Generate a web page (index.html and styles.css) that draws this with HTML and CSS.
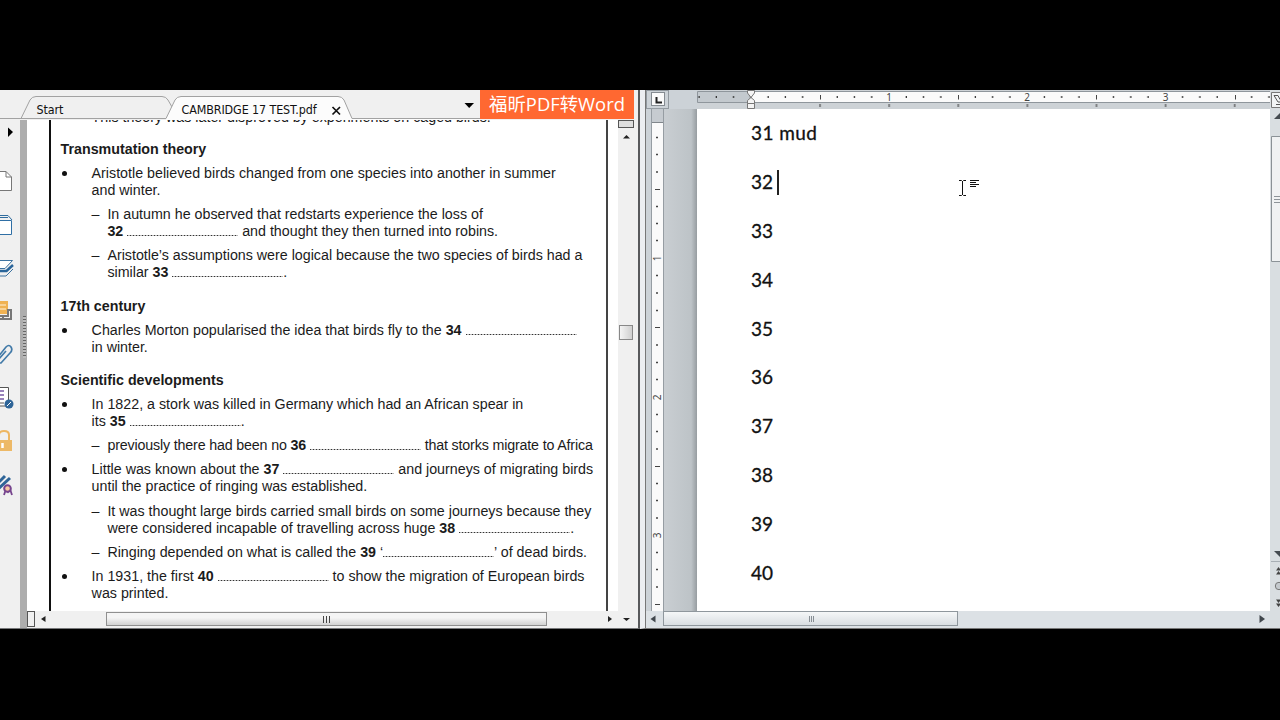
FILE: index.html
```
<!DOCTYPE html>
<html lang="en">
  <head>
    <meta charset="UTF-8" />
    <meta name="viewport" content="width=device-width, initial-scale=1" />
    <title>CAMBRIDGE 17 TEST.pdf</title>
    <link rel="stylesheet" href="styles.css">
  </head>
  <body>
    <div class="screen">
      <section class="reader">
        <header class="tabs">
          <svg class="tab-shapes" width="480" height="30">
            <path d="M-1 28.500H21L30 10Q32 6.500 36 6.500H162Q166 6.500 168 10L172 17" fill="#f0f0f0" stroke="#a2a2a2" />
            <path d="M166 29L175 10Q177 6.500 181 6.500H338Q342 6.500 344 10L352 28.500H480V30H166Z" fill="#fcfcfc" />
            <path d="M166 28.500L175 10Q177 6.500 181 6.500H338Q342 6.500 344 10L352 28.500H480M21 28.500H166" fill="none" stroke="#a2a2a2" />
            <path d="M332.500 17L340 24.500M340 17L332.500 24.500" stroke="#111" stroke-width="1.700" />
            <path d="M464.500 13H474L469.200 18Z" fill="#000" />
          </svg>
          <span class="tab-name">Start</span>
          <span class="tab-name current">CAMBRIDGE 17 TEST.pdf</span>
          <span class="convert">福昕PDF转Word</span>
        </header>

        <div class="reader-body">
          <nav class="tools">
            <svg width="20" height="510">
              <path d="M8 7.500L13 12L8 17Z" fill="#000" />
              <path d="M-2 51.500H6L11.500 57V70.500H-2Z" fill="#fff" stroke="#777" />
              <path d="M6 51.500V57H11.500" fill="none" stroke="#777" />
              <path d="M-2 95.500H8L12 100M-2 97.500H8" fill="none" stroke="#2f6c9e" />
              <path d="M-2 100.500H11.500V114.500H-2Z" fill="#fff" stroke="#2f6fa5" />
              <path d="M-2 140.500H12.500L5 148.500H-2" fill="#fff" stroke="#3c72a0" />
              <path d="M13 145L6.500 151H-2" fill="none" stroke="#2a659a" stroke-width="2.500" />
              <path d="M13 149L6 156H-2" fill="none" stroke="#3c72a0" />
              <path d="M-2 181H8V194H-2Z" fill="#efb253" />
              <path d="M0 185H6M0 189H6" stroke="#fff3dc" />
              <path d="M-2 196H8V190H11V199H-2M3 195V200" fill="none" stroke="#777" stroke-width="2" />
              <path d="M-2 237L6 227Q9 224 11 227Q13 230 10 233L1 243H-2M-2 240L6 231" fill="none" stroke="#427aa8" stroke-width="1.700" />
              <path d="M-2 267.500H8.500V286H-2" fill="#fff" stroke="#555" />
              <path d="M-2 271H4M-2 275H4M-2 279H4" stroke="#7859a5" stroke-width="1.500" />
              <path d="M-2 283H4" stroke="#555" />
              <circle cx="9" cy="284" r="4.500" fill="#2f6598" />
              <path d="M7 286L11 282" stroke="#fff" />
              <path d="M-1 320V315Q-1 311 4 311Q9 311 9 315V321" fill="none" stroke="#eeb763" stroke-width="2" />
              <path d="M-2 320H12V331H-2Z" fill="#edb967" />
              <path d="M2.500 323V328" stroke="#fff" stroke-width="2.500" />
              <path d="M-2 363L5 356M-2 369L10 358" stroke="#2f6598" stroke-width="3" />
              <path d="M4 375L6 369L8 372L10 369L12 375" fill="none" stroke="#76448d" stroke-width="1.800" />
              <circle cx="7.500" cy="368.500" r="3.300" fill="#f8c9a2" stroke="#76448d" stroke-width="2" />
            </svg>
          </nav>
          <div class="splitter"><i class="grip"></i></div>
          <div class="viewer">
            <article class="pdf">
              <p class="item cut">This theory was later disproved by experiments on caged birds.</p>
              <h2>Transmutation theory</h2>
              <p class="item dot">Aristotle believed birds changed from one species into another in summer<br>and winter.</p>
              <p class="item dash">In autumn he observed that redstarts experience the loss of<br><b>32</b> <i class="gap"></i> and thought they then turned into robins.</p>
              <p class="item dash">Aristotle’s assumptions were logical because the two species of birds had a<br>similar <b>33</b> <i class="gap"></i>.</p>
              <h2>17th century</h2>
              <p class="item dot">Charles Morton popularised the idea that birds fly to the <b>34</b> <i class="gap"></i><br>in winter.</p>
              <h2>Scientific developments</h2>
              <p class="item dot">In 1822, a stork was killed in Germany which had an African spear in<br>its <b>35</b> <i class="gap"></i>.</p>
              <p class="item dash tight">previously there had been no <b>36</b> <i class="gap"></i> that storks migrate to Africa</p>
              <p class="item dot">Little was known about the <b>37</b> <i class="gap"></i> and journeys of migrating birds<br>until the practice of ringing was established.</p>
              <p class="item dash">It was thought large birds carried small birds on some journeys because they<br>were considered incapable of travelling across huge <b>38</b> <i class="gap"></i>.</p>
              <p class="item dash">Ringing depended on what is called the <b>39</b> ‘<i class="gap"></i>’ of dead birds.</p>
              <p class="item dot">In 1931, the first <b>40</b> <i class="gap"></i> to show the migration of European birds<br>was printed.</p>
            </article>
            <div class="hscroll">
              <i class="split-box"></i>
              <svg width="71" height="16"><path d="M10.500 5V11L6 8Z" fill="#222" /></svg>
              <div class="thumb"><i></i><i></i><i></i></div>
              <svg width="71" height="16"><path d="M61 5V11L65 8Z" fill="#222" /></svg>
            </div>
          </div>
          <div class="vscroll">
            <i class="split-box"></i>
            <svg width="16" height="22"><path d="M5 10.500H12L8.500 7Z" fill="#222" /></svg>
            <i class="space"></i>
            <i class="vthumb"></i>
            <svg class="down" width="16" height="17"><path d="M5 7H12L8.500 10Z" fill="#222" /></svg>
          </div>
        </div>
      </section>

      <section class="word">
        <header class="ruler-row">
          <div class="tab-stop"><svg width="14" height="14"><path d="M4.500 4V9.500H10" fill="none" stroke="#222" stroke-width="2" /></svg></div>
          <svg class="ruler" width="573" height="19">
            <defs>
              <pattern id="dots" width="17.270" height="19" x="45.900" patternUnits="userSpaceOnUse"><path d="M8 6V8" stroke="#333" stroke-width="1.300" /></pattern>
              <pattern id="halves" width="69.100" height="19" x="19.500" patternUnits="userSpaceOnUse"><path d="M34.500 14V17" stroke="#333" /></pattern>
            </defs>
            <path d="M0 0H574V19H0Z" fill="#cdd2d6" />
            <path d="M.5 1.500H574V12.500H.5Z" fill="#c3c9ce" stroke="#8f969c" />
            <path d="M54 2H574V12H54Z" fill="#fafafa" />
            <path d="M0 2H574V12H0Z" fill="url(#dots)" />
            <path d="M100 13H574V19H100Z" fill="url(#halves)" />
            <path d="M185 2H199V12H185ZM323 2H337V12H323ZM461 2H475V12H461ZM118 2H128V12H118ZM256 2H266V12H256ZM394 2H404V12H394ZM533 2H543V12H533Z" fill="#fafafa" />
            <path d="M123.500 5V9.500M261.500 5V9.500M399.500 5V9.500M538.500 5V9.500" stroke="#444" />
            <text x="192" y="11">1</text>
            <text x="330" y="11">2</text>
            <text x="468.500" y="11">3</text>
            <path d="M50.500 .5H57.500V3L54 7.500L50.500 3ZM50.500 13.500V10.500L54 7.500L57.500 10.500V13.500ZM50.500 13.500H57.500V18.500H50.500Z" fill="#f4f4f4" stroke="#777" />
          </svg>
        </header>
        <div class="word-body">
          <svg class="vruler" width="11" height="502">
            <path d="M0 0H12V13H0Z" fill="#c6cbd0" />
            <path d="M0 13.500H12" stroke="#80868b" />
            <g stroke="#444" stroke-width="1.500">
              <path d="M4 28.500H6M4 45.500H6M4 63H6M4 97.500H6M4 114.500H6M4 131.500H6M4 166.500H6M4 184H6M4 201.500H6M4 236H6M4 253.500H6M4 270.500H6M4 305.500H6M4 322.500H6M4 340H6M4 374.500H6M4 391.500H6M4 409H6M4 443.500H6M4 460.500H6M4 478H6" />
              <path d="M3 80.500H8M3 218.500H8M3 357.500H8M3 495.500H8" stroke-width="1" />
            </g>
            <text transform="translate(9 149.500) rotate(-90)">1</text>
            <text transform="translate(9 288.500) rotate(-90)">2</text>
            <text transform="translate(9 426.500) rotate(-90)">3</text>
          </svg>
          <div class="desk"></div>
          <article class="page">
            <p class="typed">31 mud</p>
            <p>32 <i class="caret"></i></p>
            <p>33</p>
            <p>34</p>
            <p>35</p>
            <p>36</p>
            <p>37</p>
            <p>38</p>
            <p>39</p>
            <p>40</p>
          </article>
        </div>
        <footer class="word-hscroll">
          <svg width="17" height="17"><path d="M9.500 4.500V11.500L4.500 8Z" fill="#41474d" /></svg>
          <div class="thumb"><i></i><i></i><i></i></div>
          <svg class="right" width="20" height="17"><path d="M9.500 4V12L15 8Z" fill="#41474d" /></svg>
        </footer>
        <aside class="word-vscroll">
          <svg width="10" height="539">
            <path d="M1.500 2.500H12V17.500H1.500Z" fill="#f2f4f5" stroke="#777" />
            <path d="M4 5.500H8L10 9.500M4 5.500L8 12H10M6 14.500H10" fill="none" stroke="#555" />
            <path d="M4 29L10 23V29Z" fill="#454b50" />
            <path d="M1.500 46.500H12V171.500H1.500Z" fill="#f0f2f3" stroke="#8b9297" />
            <path d="M4 106.500H10M4 109.500H10M4 112.500H10" stroke="#8d9499" />
            <path d="M4 461H10V467Z" fill="#454b50" />
            <path d="M1 471.500H10" stroke="#a8afb5" />
            <path d="M6 480.500L8.500 477L11 480.500ZM6 484.500L8.500 481L11 484.500ZM6 509.500L8.500 513L11 509.500ZM6 513.500L8.500 517L11 513.500Z" fill="#444" />
            <circle cx="9" cy="496" r="3.700" fill="#c4c9cd" stroke="#777" />
          </svg>
        </aside>
        <svg class="pointer" width="22" height="20">
          <path d="M1 3.500H3.500L4.500 4.500L5.500 3.500H8M4.500 4V18M1 18.500H3.500L4.500 17.500L5.500 18.500H8" fill="none" stroke="#111" />
          <path d="M12 3.500H21M12 5.500H18M12 7.500H21M12 9.500H18" stroke="#111" />
        </svg>
      </section>
    </div>
  </body>
</html>
```
FILE: styles.css
```
* {
  box-sizing: border-box;
}
body {
  margin: 0;
  background: #000;
  overflow: hidden;
}
i {
  font-style: normal;
}
svg {
  display: block;
  flex: none;
}
.screen {
  display: flex;
  width: 1280px;
  height: 539px;
  margin-top: 90px;
}

/* pdf reader */
.reader {
  width: 640px;
  background: #f0f0f0;
  border-right: 2px solid #58595b;
  border-bottom: 1px solid #77787a;
}
.tabs {
  position: relative;
  display: flex;
  height: 30px;
  padding-left: 36.5px;
  font: 12.4px/39px "DejaVu Sans Condensed", "DejaVu Sans", sans-serif;
  color: #111;
}
.tab-shapes {
  position: absolute;
  left: 0;
  top: 0;
}
.tab-name {
  position: relative;
  width: 145px;
  height: 29px;
  letter-spacing: -0.1px;
}
.tab-name.current {
  width: 298.5px;
  white-space: nowrap;
}
.convert {
  position: relative;
  width: 154px;
  height: 29px;
  background: #ff6831;
  color: #fff;
  font: 18.4px/28px "Open Sans", "Noto Sans CJK SC", sans-serif;
  text-align: center;
  white-space: nowrap;
}
.reader-body {
  display: flex;
  height: 508px;
}
.tools {
  width: 20px;
  overflow: hidden;
}
.splitter {
  width: 7px;
  padding: 196px 0 0 3px;
  background: #adadad;
}
.grip {
  display: block;
  width: 3px;
  height: 42px;
  background: repeating-linear-gradient(#666 0 1px, #bbb 1px 3px);
}
.viewer {
  width: 591px;
  background: #fff;
}
.pdf {
  height: 491px;
  margin-left: 22px;
  width: 559px;
  padding-left: 9.6px;
  border-left: 2px solid #111;
  border-right: 2px solid #444;
  overflow: hidden;
  color: #1b1b1b;
  font: 14.26px/17px "Liberation Sans", Arial, sans-serif;
  white-space: nowrap;
}
.pdf h2 {
  margin: 16px 0 7.1px;
  font-size: 14.26px;
  line-height: 17px;
}
.pdf .item {
  position: relative;
  margin: 0 0 7.1px;
  padding-left: 31px;
}
.pdf .item + h2 {
  margin-top: 16.5px;
}
.pdf .item.cut {
  margin-top: -11px;
}
.pdf .item.cut + h2 {
  margin-top: 14.8px;
}
.pdf .item.dash {
  padding-left: 46.8px;
}
.pdf .item.tight {
  letter-spacing: -0.16px;
}
.item.dot::before,
.item.dash::before {
  position: absolute;
}
.item.dot::before {
  content: "";
  left: 1px;
  top: 6px;
  width: 5px;
  height: 5px;
  border-radius: 50%;
  background: #111;
}
.item.dash::before {
  content: "–";
  left: 31px;
}
.gap {
  display: inline-block;
  width: 111px;
  height: 1px;
  background: repeating-linear-gradient(90deg, #333 0 1px, #bbb 1px 3px);
}

/* reader scrollbars */
.hscroll {
  display: flex;
  height: 17px;
  background: #f0f0f0;
}
.hscroll .split-box {
  width: 8px;
  height: 16px;
  border: 1px solid #555;
}
.hscroll .thumb {
  width: 441px;
  height: 14px;
  margin-top: 1px;
  background: linear-gradient(#f4f4f4 40%, #d2d2d2);
  border: 1px solid #8f8f8f;
}
.thumb {
  display: flex;
  justify-content: center;
  align-items: center;
  gap: 2px;
}
.thumb i {
  width: 1px;
  height: 7px;
  background: #444;
}
.vscroll {
  display: flex;
  flex-direction: column;
  width: 16px;
}
.vscroll .split-box {
  width: 16px;
  height: 8px;
  border: 1px solid #555;
  background: #dedede;
}
.space {
  height: 175px;
}
.vthumb {
  width: 14px;
  height: 15px;
  margin-left: 1px;
  border: 1px solid #888;
  background: linear-gradient(90deg, #f4f4f4, #cfcfcf);
}
.down {
  margin-top: auto;
}

/* word */
.word {
  position: relative;
  display: grid;
  grid-template: 19px 502px 17px / 625px 10px;
  width: 640px;
  background: #ccd2d7;
  border-left: 5px solid #eceef1;
  border-bottom: 1px solid #777;
  overflow: hidden;
}
.word text {
  font: 10px "Noto Sans", sans-serif;
  fill: #444;
  text-anchor: middle;
}
.ruler-row {
  display: flex;
  border-left: 1px solid #777;
}
.tab-stop {
  width: 23px;
  height: 19px;
  padding: 1px 4px;
  border: 1px solid #92999f;
  margin-right: 28px;
}
.tab-stop svg {
  background: #fafafa;
  border: 1px solid #858b91;
}
.word-body {
  display: flex;
  border-left: 1px solid #777;
  padding-left: 6px;
}
.vruler {
  overflow: visible;
  background: #fafafa;
  outline: 1px solid #969da3;
}
.desk {
  width: 34px;
  margin-left: 1px;
  margin-right: -1px;
  background: linear-gradient(90deg, #c9ced2, #bdc3c7 80%, #90969a);
}
.page {
  position: relative;
  width: 573px;
  padding-left: 54px;
  background: #fff;
  font: 19px/47px Lato, sans-serif;
  color: #111;
  -webkit-text-stroke: 0.3px #111;
}
.page p {
  height: 48.9px;
  margin: 0;
}
.typed {
  letter-spacing: 0.45px;
}
.caret {
  display: inline-block;
  width: 2px;
  height: 25px;
  margin-left: -1px;
  background: #222;
  vertical-align: -6px;
}
.word-hscroll {
  display: flex;
  background: #dce1e5;
  border-left: 1px solid #777;
}
.word-hscroll .thumb {
  width: 295px;
  height: 15px;
  border: 1px solid #8f979d;
  background: linear-gradient(#f5f7f8, #d9dee2);
}
.word-hscroll .thumb i {
  height: 6px;
  background: #878e94;
  margin-right: -1px;
}
.right {
  margin-left: auto;
}
.word-vscroll {
  grid-column: 2;
  grid-row: 1 / 4;
  background: #d9dee1;
}
.pointer {
  position: absolute;
  left: 313px;
  top: 87px;
}
```
